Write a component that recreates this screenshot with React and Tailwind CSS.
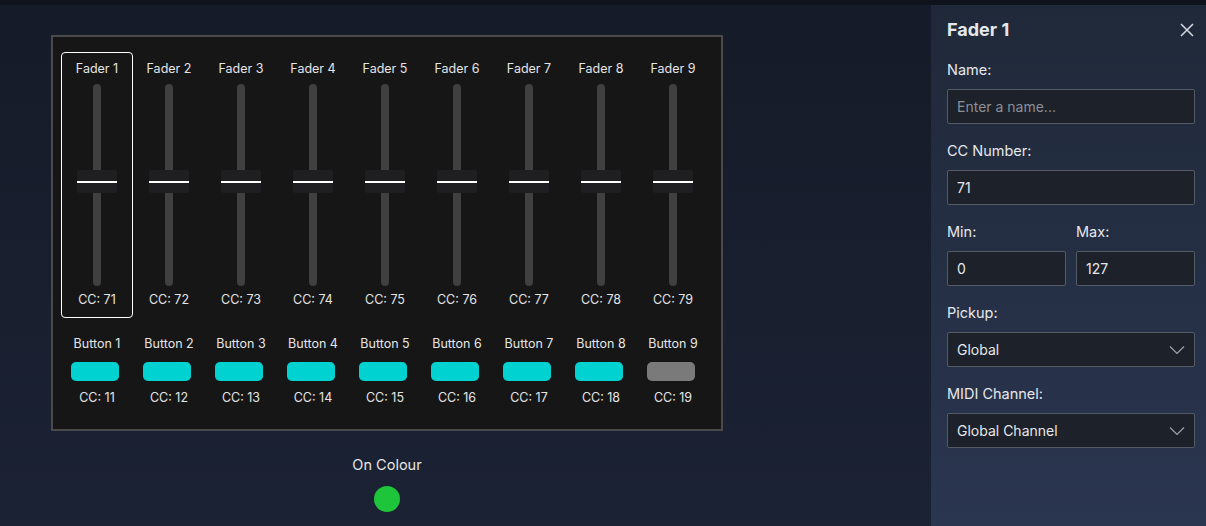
import React from "react";

const cols = [1,2,3,4,5,6,7,8,9];

function Chevron() {
  return (
    <svg width="16" height="10" viewBox="0 0 16 10" fill="none" stroke="#9ca3af" strokeWidth="1.2"><path d="M1 1.5 L8 8.5 L15 1.5" /></svg>
  );
}

export default function App() {
  const font = { fontFamily: "Inter, 'Noto Sans', sans-serif" };
  return (
    <div style={font} className="w-[1206px] h-[526px] flex flex-col bg-[#171d2b] overflow-hidden">
      <div className="h-[5px] bg-[#0f131c] shrink-0" />
      <div className="flex flex-1 min-h-0">
        <div className="flex-1 bg-gradient-to-b from-[#151b28] to-[#1b2234] pl-[51px] pt-[30px]">
          <div className="w-[672px] h-[396px] bg-[#161616] border-2 border-[#4a4a4a] pt-[15px] pl-[8px]">
            <div className="flex">
              {cols.map((i) => (
                <div key={i} className={`w-[72px] h-[266px] flex flex-col items-center rounded-[4px] ${i === 1 ? "border border-white" : "border border-transparent"}`}>
                  <div className="text-[12.5px] text-[#e5e5e5] mt-[8px] leading-[16px]">Fader {i}</div>
                  <div className="relative mt-[7px] w-[8px] h-[202px] bg-[#404040] rounded-full">
                    <div className="absolute left-1/2 -translate-x-1/2 top-[86px] w-[40px] h-[23px] bg-[#1f1f22] rounded-[3px] flex items-center">
                      <div className="w-full h-[2px] bg-white" />
                    </div>
                  </div>
                  <div className="text-[12.5px] text-[#e5e5e5] mt-[6px] leading-[16px]">CC: {70 + i}</div>
                </div>
              ))}
            </div>
            <div className="flex mt-[18px]">
              {cols.map((i) => (
                <div key={i} className="w-[72px] flex flex-col items-center">
                  <div className="text-[12.5px] text-[#e5e5e5] leading-[16px]">Button {i}</div>
                  <div className={`mt-[10px] -ml-[4px] w-[48px] h-[19px] rounded-[5px] ${i === 9 ? "bg-[#7a7a7a]" : "bg-[#00d1d1]"}`} />
                  <div className="text-[12.5px] text-[#e5e5e5] mt-[9px] leading-[16px]">CC: {10 + i}</div>
                </div>
              ))}
            </div>
          </div>
          <div className="w-[672px] flex flex-col items-center mt-[25px]">
            <div className="text-[14.5px] text-[#e5e5e5] leading-[18px]">On Colour</div>
            <div className="mt-[12px] w-[26px] h-[26px] rounded-full bg-[#1ec43a]" />
          </div>
        </div>
        <div className="w-[275px] bg-gradient-to-b from-[#202939] to-[#2a3550] pl-[16px] pr-[11px] pt-[14px] text-[#e5e7eb]">
          <div className="flex items-center justify-between">
            <div className="text-[18px] font-bold leading-[22px]">Fader 1</div>
            <svg width="16" height="16" viewBox="0 0 16 16" stroke="#d1d5db" strokeWidth="1.6"><path d="M2 2 L14 14 M14 2 L2 14" /></svg>
          </div>
          <div className="text-[14.5px] mt-[20px] leading-[18px]">Name:</div>
          <div className="mt-[10px] h-[35px] bg-[#1d212a] border border-[#555b66] rounded-[2px] flex items-center px-[9px] text-[14px] text-[#8a8f98]">Enter a name...</div>
          <div className="text-[14.5px] mt-[18px] leading-[18px]">CC Number:</div>
          <div className="mt-[10px] h-[35px] bg-[#1d212a] border border-[#555b66] rounded-[2px] flex items-center px-[9px] text-[14px]">71</div>
          <div className="flex gap-[10px]">
            <div className="flex-1">
              <div className="text-[14.5px] mt-[18px] leading-[18px]">Min:</div>
              <div className="mt-[10px] h-[35px] bg-[#1d212a] border border-[#555b66] rounded-[2px] flex items-center px-[9px] text-[14px]">0</div>
            </div>
            <div className="flex-1">
              <div className="text-[14.5px] mt-[18px] leading-[18px]">Max:</div>
              <div className="mt-[10px] h-[35px] bg-[#1d212a] border border-[#555b66] rounded-[2px] flex items-center px-[9px] text-[14px]">127</div>
            </div>
          </div>
          <div className="text-[14.5px] mt-[18px] leading-[18px]">Pickup:</div>
          <div className="mt-[10px] h-[35px] bg-[#1d212a] border border-[#555b66] rounded-[2px] flex items-center justify-between px-[9px] text-[14px]">Global<Chevron /></div>
          <div className="text-[14.5px] mt-[18px] leading-[18px]">MIDI Channel:</div>
          <div className="mt-[10px] h-[35px] bg-[#1d212a] border border-[#555b66] rounded-[2px] flex items-center justify-between px-[9px] text-[14px]">Global Channel<Chevron /></div>
        </div>
      </div>
    </div>
  );
}
